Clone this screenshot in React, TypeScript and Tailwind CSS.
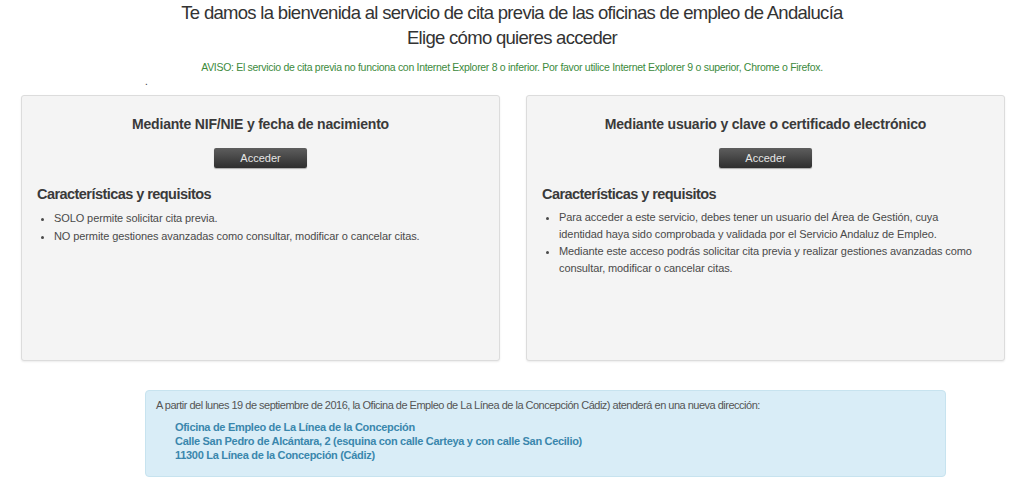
export default function App() {
  return (
    <div className="w-[1024px] h-[480px] bg-white overflow-hidden font-['Liberation_Sans',Arial,sans-serif] text-[#333]">
      <div className="text-center text-[18.5px] leading-[25px] tracking-[-0.7px] text-[#333]">
        <p>Te damos la bienvenida al servicio de cita previa de las oficinas de empleo de Andalucía</p>
        <p>Elige cómo quieres acceder</p>
      </div>
      <p className="text-center mt-[10px] text-[10.5px] leading-[14px] tracking-[-0.3px] text-[#3c8a3c]">
        AVISO: El servicio de cita previa no funciona con Internet Explorer 8 o inferior. Por favor utilice Internet Explorer 9 o superior, Chrome o Firefox.
      </p>
      <div className="h-[16px] pl-[145px] text-[10px] leading-[16px] text-[#333]">.</div>
      <div className="flex gap-[26px] pl-[21px] pr-[19px] pt-[5px]">
        <Box
          title="Mediante NIF/NIE y fecha de nacimiento"
          items={[
            'SOLO permite solicitar cita previa.',
            'NO permite gestiones avanzadas como consultar, modificar o cancelar citas.',
          ]}
          leading="leading-[18px]"
        />
        <Box
          title="Mediante usuario y clave o certificado electrónico"
          items={[
            'Para acceder a este servicio, debes tener un usuario del Área de Gestión, cuya identidad haya sido comprobada y validada por el Servicio Andaluz de Empleo.',
            'Mediante este acceso podrás solicitar cita previa y realizar gestiones avanzadas como consultar, modificar o cancelar citas.',
          ]}
          leading="leading-[17px]"
        />
      </div>
      <div className="ml-[145px] mt-[29px] w-[801px] h-[87px] rounded-[4px] border border-[#c7e3ef] bg-[#d9edf7] px-[10px] pt-[7px] text-[11px]">
        <p className="leading-[14px] tracking-[-0.5px] text-[#555]">
          A partir del lunes 19 de septiembre de 2016, la Oficina de Empleo de La Línea de la Concepción Cádiz) atenderá en una nueva dirección:
        </p>
        <div className="mt-[8px] pl-[19px] font-bold leading-[14px] tracking-[-0.3px] text-[#3a87ad]">
          <p>Oficina de Empleo de La Línea de la Concepción</p>
          <p>Calle San Pedro de Alcántara, 2 (esquina con calle Carteya y con calle San Cecilio)</p>
          <p>11300 La Línea de la Concepción (Cádiz)</p>
        </div>
      </div>
    </div>
  );
}

function Box({ title, items, leading }: { title: string; items: string[]; leading: string }) {
  return (
    <div className="flex-1 h-[266px] rounded-[3px] border border-[#dcdcdc] bg-[#f4f4f4] shadow-[0_1px_2px_rgba(0,0,0,0.08)] px-[15px]">
      <h2 className="mt-[18px] text-center text-[14px] font-bold leading-[20px] tracking-[-0.2px] text-[#3a3a3a]">{title}</h2>
      <div className="mt-[14px] flex justify-center">
        <button className="w-[93px] h-[20px] rounded-[2px] bg-gradient-to-b from-[#5e5e5e] to-[#2f2f2f] text-[11px] leading-[20px] text-[#e6e6e6] shadow-[0_1px_1px_rgba(0,0,0,0.3)]">
          Acceder
        </button>
      </div>
      <h3 className="mt-[15px] text-[14.5px] font-bold leading-[22px] tracking-[-0.55px] text-[#3a3a3a]">Características y requisitos</h3>
      <ul className={`mt-[4px] pl-[17px] list-disc text-[11px] tracking-[-0.1px] text-[#4a4a4a] ${leading}`}>
        {items.map((it, i) => (
          <li key={i} className="pr-[16px]">{it}</li>
        ))}
      </ul>
    </div>
  );
}
